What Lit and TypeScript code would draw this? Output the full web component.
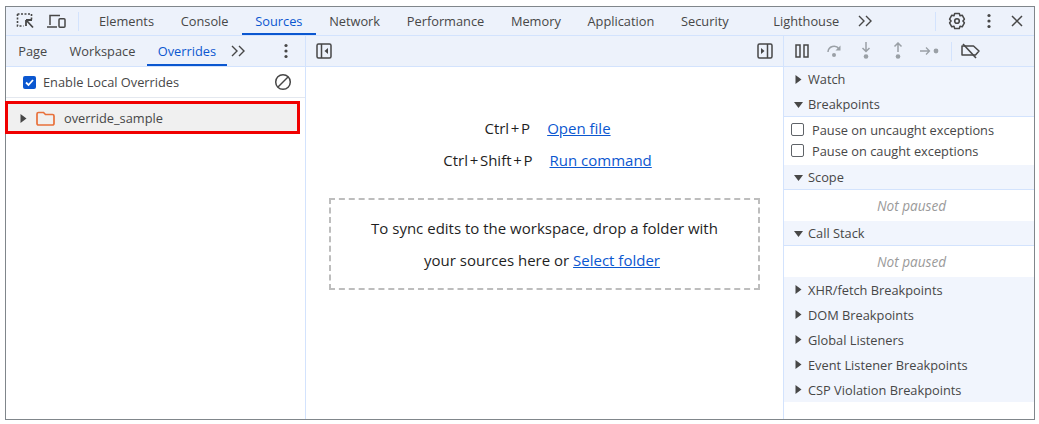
import { LitElement, html, css } from "lit";
import { customElement } from "lit/decorators.js";

const chevrons = html`<svg class="chev" width="16" height="14" viewBox="0 0 16 14"><path d="M2 2l5 5-5 5M9 2l5 5-5 5" fill="none" stroke="#474747" stroke-width="1.4"/></svg>`;
const dots = html`<svg width="6" height="16" viewBox="0 0 6 16"><circle cx="3" cy="2.5" r="1.6" fill="#474747"/><circle cx="3" cy="8" r="1.6" fill="#474747"/><circle cx="3" cy="13.5" r="1.6" fill="#474747"/></svg>`;
const tri = (open: boolean) => html`<svg class="tri" width="9" height="9" viewBox="0 0 9 9"><path d="${open ? "M0 2h9L4.5 8z" : "M1.5 0l6 4.5-6 4.500z"}" fill="#474747"/></svg>`;

@customElement("app-root")
export class AppRoot extends LitElement {
  static styles = css`
    :host { display: block; width: 1039px; height: 424px; background: #fff; font-family: "Open Sans", "Noto Sans", sans-serif; font-size: 12.8px; color: #474747; overflow: hidden; }
    .frame { margin: 6px 4px 0 5px; height: 414px; box-sizing: border-box; border: 1px solid #80868b; display: flex; flex-direction: column; position: relative; }
    .top { height: 29px; box-sizing: border-box; background: #edf2fb; border-bottom: 1px solid #d3e3fd; display: flex; align-items: center; flex: none; }
    .top .ic1 { margin-left: 10px; display: flex; }
    .top .ic2 { margin-left: 11px; display: flex; }
    .sep { width: 1px; height: 19px; background: #d3e3fd; flex: none; }
    .sep.s1 { margin-left: 12px; }
    .sep.s2 { margin-right: 12px; }
    .sep.s3 { margin: 0 9px 0 5px; }
    .tabs { display: flex; height: 100%; margin-left: 6.600px; }
    .tab { padding: 0 13.350px; display: flex; align-items: center; box-sizing: border-box; height: 100%; white-space: nowrap; border-bottom: 2px solid transparent; padding-top: 2px; }
    .tab.on { color: #0b57d0; border-bottom-color: #0b57d0; }
    .tab.lh { margin-left: 18px; }
    .more { margin-left: 4px; display: flex; }
    .right { margin-left: auto; display: flex; align-items: center; }
    .kebab { margin-left: 20px; display: flex; }
    .close { margin: 0 11px 0 19px; }
    .main { flex: 1; display: flex; min-height: 0; }
    .left { width: 299px; flex: none; border-right: 1px solid #d3e3fd; display: flex; flex-direction: column; }
    .subbar { height: 31px; flex: none; box-sizing: border-box; background: #edf2fb; border-bottom: 1px solid #d3e3fd; display: flex; align-items: center; }
    .subtabs { display: flex; height: 100%; margin-left: 1px; }
    .subtabs .tab { padding: 0 11.200px; padding-top: 2px; }
    .submore { margin-left: 3px; display: flex; }
    .subkebab { margin-left: 37px; display: flex; }
    .enable { height: 31px; flex: none; display: flex; align-items: center; border-bottom: 1px solid #e4e8ef; padding-left: 17px; box-sizing: border-box; }
    .cb { width: 13px; height: 13px; border-radius: 2px; background: #0b57d0; display: flex; align-items: center; justify-content: center; margin-right: 7px; flex: none; }
    .block { margin-left: 95px; }
    .tree { margin: 5px 0 0 0; height: 30px; background: #f0f0f0; display: flex; align-items: center; padding-left: 13px; box-sizing: border-box; width: 293px; border-radius: 3px; }
    .tree .tri { margin-right: 8px; }
    .tree .name { margin-left: 9px; }
    .redbox { position: absolute; left: -1px; top: 94px; width: 295px; height: 33px; box-sizing: border-box; border: 3px solid #f00000; pointer-events: none; }
    .center { flex: 1; display: flex; flex-direction: column; min-width: 0; border-right: 1px solid #d3e3fd; }
    .cbar { justify-content: space-between; padding: 0 10px; }
    .cbody { flex: 1; display: flex; flex-direction: column; align-items: center; color: #1f1f1f; font-size: 15px; }
    .sc { display: flex; height: 32px; align-items: center; white-space: nowrap; padding-left: 6px; }
    .sc.first { margin-top: 45px; }
    .sc .keys { margin-right: 17px; word-spacing: -2.200px; }
    a { color: #0b57d0; text-decoration: underline; }
    .drop { width: 431px; height: 92px; margin-top: 22px; box-sizing: border-box; border: 2px dashed #bdbdbd; display: flex; flex-direction: column; align-items: center; justify-content: center; line-height: 32px; }
    .l2 { padding-right: 5px; }
    .side { width: 250px; flex: none; display: flex; flex-direction: column; }
    .dbar { padding-left: 2px; gap: 0; }
    .dbar .b { width: 32px; display: flex; justify-content: center; }
    .sec { height: 25px; background: #f1f5fd; display: flex; align-items: center; padding-left: 10px; box-sizing: border-box; flex: none; }
    .sec .tri { margin-right: 5px; }
    .sec.line { border-bottom: 1px solid #d3e3fd; }
    .sec.watch { height: 24px; }
    .sec.bp { height: 26px; padding-top: 1px; }
    .sec.scope { margin-top: 4px; }
    .pause { height: 21px; display: flex; align-items: center; padding-left: 7px; }
    .pause.p1 { margin-top: 2px; }
    .box { border: 1px solid #5f6368; border-radius: 2px; margin-right: 8px; box-sizing: content-box; flex: none; width: 11px; height: 11px; }
    .np { height: 31px; display: flex; align-items: center; justify-content: center; font-style: italic; font-size: 13.600px; color: #9a9a9a; padding-left: 5px; }
  `;

  render() {
    const tabs = ["Elements", "Console", "Sources", "Network", "Performance", "Memory", "Application", "Security"];
    const faded = "#9aa0a6";
    return html`<div class="frame">
      <div class="top">
        <span class="ic1"><svg width="20" height="18" viewBox="0 0 20 18"><path d="M1.500 2h14v6M1.500 2v12h6" fill="none" stroke="#474747" stroke-width="1.6" stroke-dasharray="2 1.500"/><path d="M10 8h6M10 8v6M10.500 8.500l6.500 7" fill="none" stroke="#474747" stroke-width="1.800"/></svg></span>
        <span class="ic2"><svg width="19" height="15" viewBox="0 0 19 15"><path d="M3 11V1.500h10M0 13h10" fill="none" stroke="#474747" stroke-width="1.500"/><rect x="12" y="4.700" width="6" height="8.500" rx="1" fill="none" stroke="#474747" stroke-width="1.500"/></svg></span>
        <span class="sep s1"></span>
        <div class="tabs">
          ${tabs.map((t) => html`<div class="tab ${t === "Sources" ? "on" : ""}">${t}</div>`)}
          <div class="tab lh">Lighthouse</div>
        </div>
        <span class="more">${chevrons}</span>
        <div class="right">
          <span class="sep s2"></span>
          <svg width="18" height="18" viewBox="0 0 18 18"><path d="M6.700 1.500h4.600l.7 2.200 2.200-.5 2.200 4-1.500 1.800 1.500 1.800-2.200 4-2.200-.5-.7 2.200H6.700L6 14.300l-2.200.5-2.200-4L3.100 9 1.600 7.200l2.200-4 2.200.5z" fill="none" stroke="#474747" stroke-width="1.500" stroke-linejoin="round"/><circle cx="9" cy="9" r="2.300" fill="none" stroke="#474747" stroke-width="1.600"/></svg>
          <span class="kebab">${dots}</span>
          <svg class="close" width="12" height="12" viewBox="0 0 12 12"><path d="M1 1l10 10M11 1L1 11" stroke="#474747" stroke-width="1.500"/></svg>
        </div>
      </div>
      <div class="main">
        <div class="left">
          <div class="subbar">
            <div class="subtabs">
              <div class="tab">Page</div><div class="tab">Workspace</div><div class="tab on">Overrides</div>
            </div>
            <span class="submore">${chevrons}</span>
            <span class="subkebab">${dots}</span>
          </div>
          <div class="enable">
            <span class="cb"><svg width="11" height="11" viewBox="0 0 11 11"><path d="M2 5.500l2.500 2.500L9 3" fill="none" stroke="#fff" stroke-width="1.800"/></svg></span>
            <span>Enable Local Overrides</span>
            <svg class="block" width="18" height="18" viewBox="0 0 18 18"><circle cx="9" cy="9" r="7.300" fill="none" stroke="#474747" stroke-width="1.500"/><path d="M4 14L14 4" stroke="#474747" stroke-width="1.500"/></svg>
          </div>
          <div class="tree">
            ${tri(false)}
            <svg width="19" height="15" viewBox="0 0 19 15"><path d="M1 3a1.500 1.500 0 011.500-1.500h5L9.500 3.500H16.500A1.500 1.500 0 0118 5v7.500a1.500 1.500 0 01-1.500 1.500h-14A1.500 1.500 0 011 12.500z" fill="none" stroke="#e8703a" stroke-width="1.700"/></svg>
            <span class="name">override_sample</span>
          </div>
        </div>
        <div class="center">
          <div class="subbar cbar">
            <svg width="16" height="16" viewBox="0 0 16 16"><rect x="1" y="1" width="14" height="14" rx="1.500" fill="none" stroke="#474747" stroke-width="1.500"/><path d="M5.500 1v14" stroke="#474747" stroke-width="1.500"/><path d="M12 5v6L8.500 8z" fill="#474747"/></svg>
            <svg width="16" height="16" viewBox="0 0 16 16"><rect x="1" y="1" width="14" height="14" rx="1.500" fill="none" stroke="#474747" stroke-width="1.500"/><path d="M10.500 1v14" stroke="#474747" stroke-width="1.500"/><path d="M4 5v6l3.500-3z" fill="#474747"/></svg>
          </div>
          <div class="cbody">
            <div class="sc first"><span class="keys">Ctrl + P</span><a>Open file</a></div>
            <div class="sc"><span class="keys">Ctrl + Shift + P</span><a>Run command</a></div>
            <div class="drop">
              <div>To sync edits to the workspace, drop a folder with</div>
              <div class="l2">your sources here or <a>Select folder</a></div>
            </div>
          </div>
        </div>
        <div class="side">
          <div class="subbar dbar">
            <span class="b"><svg width="14" height="14" viewBox="0 0 14 14"><path d="M1 1h4v12H1zM9 1h4v12H9z" fill="none" stroke="#474747" stroke-width="1.500"/></svg></span>
            <span class="b"><svg width="16" height="14" viewBox="0 0 16 14"><path d="M2 8a6 6 0 0111-3" fill="none" stroke="${faded}" stroke-width="1.500"/><path d="M14.500 1.500v5h-5z" fill="${faded}"/><circle cx="8" cy="11" r="2" fill="${faded}"/></svg></span>
            <span class="b"><svg width="12" height="18" viewBox="0 0 12 18"><path d="M6 0v9M2.500 6L6 9.500 9.500 6" fill="none" stroke="${faded}" stroke-width="1.500"/><circle cx="6" cy="14.500" r="2.300" fill="${faded}"/></svg></span>
            <span class="b"><svg width="12" height="18" viewBox="0 0 12 18"><path d="M6 10V1M2.500 4.500L6 1l3.500 3.500" fill="none" stroke="${faded}" stroke-width="1.500"/><circle cx="6" cy="14.500" r="2.300" fill="${faded}"/></svg></span>
            <span class="b"><svg width="20" height="10" viewBox="0 0 20 10"><path d="M0 5h9M6 1.500L9.500 5 6 8.500" fill="none" stroke="${faded}" stroke-width="1.300"/><circle cx="16" cy="5" r="2.400" fill="${faded}"/></svg></span>
            <span class="sep s3"></span>
            <svg width="20" height="16" viewBox="0 0 20 16"><path d="M1 3h11.500l5.500 5-3.500 4H5.500L1 12z" fill="none" stroke="#474747" stroke-width="1.500" stroke-linejoin="round"/><path d="M2 1l13 14" stroke="#474747" stroke-width="1.600"/></svg>
          </div>
          <div class="sec watch">${tri(false)}Watch</div>
          <div class="sec line bp">${tri(true)}Breakpoints</div>
          <div class="pause p1"><span class="box"></span>Pause on uncaught exceptions</div>
          <div class="pause"><span class="box"></span>Pause on caught exceptions</div>
          <div class="sec line scope">${tri(true)}Scope</div>
          <div class="np">Not paused</div>
          <div class="sec line">${tri(true)}Call Stack</div>
          <div class="np">Not paused</div>
          ${["XHR/fetch Breakpoints", "DOM Breakpoints", "Global Listeners", "Event Listener Breakpoints", "CSP Violation Breakpoints"].map((t) => html`<div class="sec">${tri(false)}${t}</div>`)}
        </div>
      </div>
      <div class="redbox"></div>
    </div>`;
  }
}
